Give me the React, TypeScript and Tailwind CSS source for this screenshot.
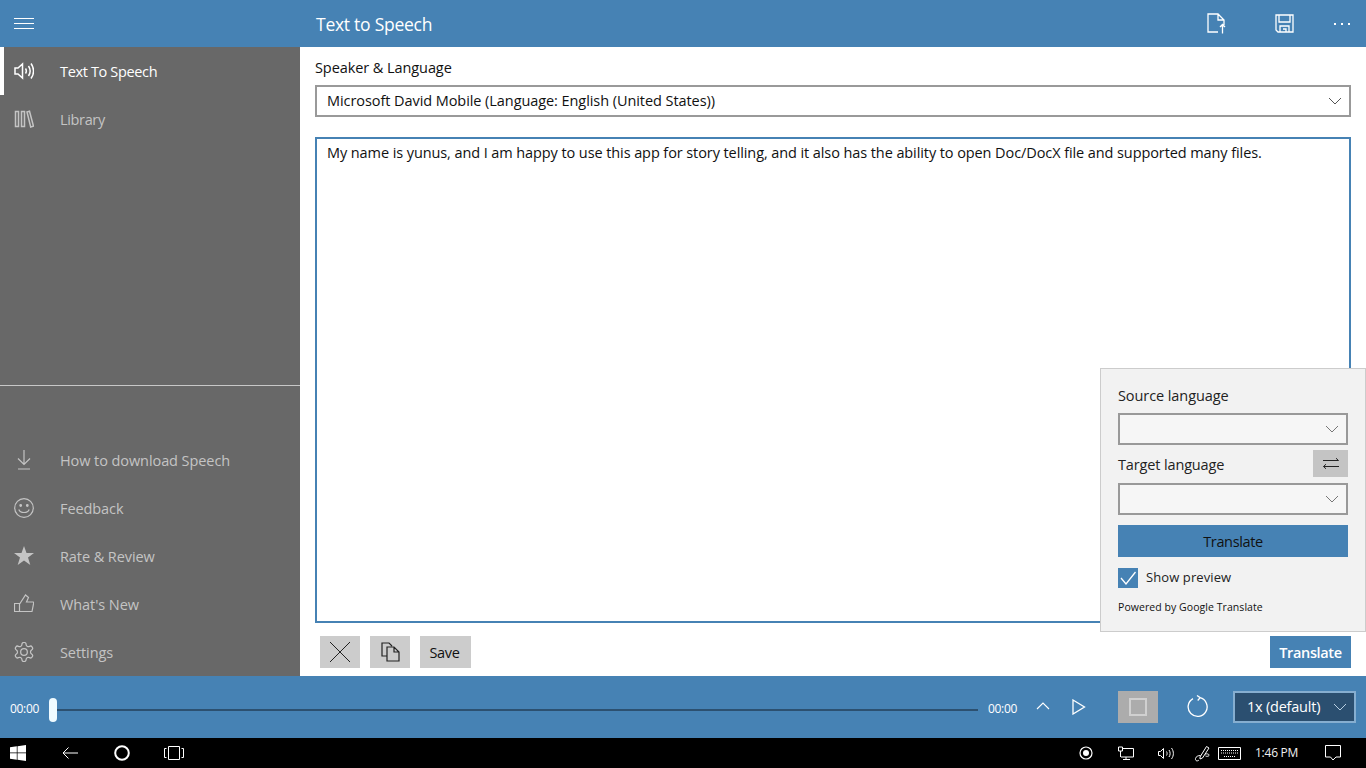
import React from "react";

const font = { fontFamily: '"Open Sans", "Noto Sans", sans-serif' };

function Chevron({ className = "", color = "#555" }: { className?: string; color?: string }) {
  return (
    <svg width="14" height="8" viewBox="0 0 14 8" className={className} fill="none" stroke={color} strokeWidth="1">
      <path d="M1 1l6 6 6-6" />
    </svg>
  );
}

function SelectBox() {
  return (
    <div className="h-8 w-[230px] border-2 border-[#999999] bg-[#f6f6f6] flex items-center justify-end pr-[7px]">
      <Chevron color="#777" />
    </div>
  );
}

const navIcon = "w-[20px] h-[20px] shrink-0";

function Item({ icon, label, active, tight }: { icon: React.ReactNode; label: string; active?: boolean; tight?: boolean }) {
  return (
    <div className={`relative h-12 flex items-center pl-[14px] ${active ? "text-white" : "text-[#c4c4c4]"}`}>
      {active && <div className="absolute left-0 top-0 bottom-0 w-1 bg-white" />}
      {icon}
      <span className={`ml-[26px] mt-[2px] text-[14.5px] ${tight ? "tracking-[-0.35px]" : "tracking-[-0.08px]"}`}>{label}</span>
    </div>
  );
}

export default function App() {
  return (
    <div style={font} className="w-[1366px] h-[768px] overflow-hidden flex flex-col relative bg-white text-[#111]">
      <header className="h-[47px] shrink-0 bg-[#4682b4] flex items-center text-white">
        <div className="w-[300px] pl-[14px]">
          <svg width="20" height="12" viewBox="0 0 20 12" stroke="white" strokeWidth="1"><path d="M0 .5h20M0 5.5h20M0 10.5h20" /></svg>
        </div>
        <div className="pl-4 text-[17.5px] tracking-[-0.26px] flex-1 mt-[2px]">Text to Speech</div>
        <svg width="20" height="21" viewBox="0 0 20 21" fill="none" stroke="white" strokeWidth="1.3" className="mr-[48px]">
          <path d="M11 19H1V1h10l6 6v5M11 1v6h6M15.500 20.500v-9M13 14l2.500-2.500L18 14" />
        </svg>
        <svg width="19" height="19" viewBox="0 0 19 19" fill="none" stroke="white" strokeWidth="1.3" className="mr-[40px]">
          <path d="M1 1h17v17H3l-2-2zM4 1v7h11V1M5 18v-6h9v6M8 15h3v3" />
        </svg>
        <svg width="16" height="3" viewBox="0 0 16 3" fill="white" className="mr-4 mt-[2px]">
          <rect x="0" y="0" width="2" height="2" /><rect x="7" y="0" width="2" height="2" /><rect x="14" y="0" width="2" height="2" />
        </svg>
      </header>

      <div className="flex-1 flex min-h-0">
        <aside className="w-[300px] shrink-0 bg-[#686868] flex flex-col">
          <div className="h-[338px] border-b border-[#c8c8c8] shrink-0 box-content">
            <Item active tight label="Text To Speech" icon={
              <svg className={navIcon} viewBox="0 0 20 20" fill="none" stroke="white" strokeWidth="1.5">
                <path d="M1 7v6h3l4.500 4V3L4 7zM11.500 7.500c1 1.500 1 3.500 0 5M14.500 5c2 3 2 7 0 10M17 2.500c3.400 4.500 3.400 10.500 0 15" />
              </svg>} />
            <Item tight label="Library" icon={
              <svg className={navIcon} viewBox="0 0 20 20" fill="none" stroke="#c4c4c4" strokeWidth="1.500">
                <path d="M1.500 2.500h3v15h-3zM7.500 2.500h3v15h-3zM13 3l2.500-.8 4 15-2.800.8z" />
              </svg>} />
          </div>
          <div className="mt-[50px]">
            <Item label="How to download Speech" icon={
              <svg className={navIcon} viewBox="0 0 20 20" fill="none" stroke="#c4c4c4" strokeWidth="1.200">
                <path d="M10 0v14M4 8.500l6 6 6-6M4 19h12" />
              </svg>} />
            <Item label="Feedback" icon={
              <svg className={navIcon} viewBox="0 0 20 20" fill="none" stroke="#c4c4c4" strokeWidth="1.200">
                <circle cx="10" cy="10" r="9.300" />
                <path d="M4.800 11.500c1.500 4 8.900 4 10.400 0" />
                <circle cx="6.700" cy="7.500" r=".8" fill="#c4c4c4" /><circle cx="13.300" cy="7.500" r=".8" fill="#c4c4c4" />
              </svg>} />
            <Item label="Rate & Review" icon={
              <svg className={navIcon} viewBox="0 0 20 20" fill="#c4c4c4">
                <path d="M10 0l2.500 7H20l-6 4.500 2.300 7.500L10 14.500 3.700 19 6 11.500 0 7h7.500z" />
              </svg>} />
            <Item label="What's New" icon={
              <svg className={navIcon} viewBox="0 0 20 20" fill="none" stroke="#c4c4c4" strokeWidth="1.200">
                <path d="M.5 17.500v-8h5.500L11.500 1l3 2.500-2 4.500h6.500c.8 0 .8 1 .5 2l-1.500 7.500zM5.500 9.500v8" />
              </svg>} />
            <Item label="Settings" icon={
              <svg className={navIcon} viewBox="1.500 1.500 21 21" fill="none" stroke="#c4c4c4" strokeWidth="1.300">
                <path d="M12.220 2h-.44a2 2 0 0 0-2 2v.18a2 2 0 0 1-1 1.730l-.43.250a2 2 0 0 1-2 0l-.15-.080a2 2 0 0 0-2.730.730l-.22.380a2 2 0 0 0 .730 2.730l.15.100a2 2 0 0 1 1 1.720v.51a2 2 0 0 1-1 1.740l-.15.090a2 2 0 0 0-.73 2.730l.22.380a2 2 0 0 0 2.730.730l.15-.080a2 2 0 0 1 2 0l.43.250a2 2 0 0 1 1 1.730V20a2 2 0 0 0 2 2h.44a2 2 0 0 0 2-2v-.18a2 2 0 0 1 1-1.730l.43-.250a2 2 0 0 1 2 0l.15.080a2 2 0 0 0 2.730-.730l.22-.390a2 2 0 0 0-.73-2.730l-.15-.080a2 2 0 0 1-1-1.740v-.5a2 2 0 0 1 1-1.740l.15-.090a2 2 0 0 0 .73-2.730l-.22-.380a2 2 0 0 0-2.730-.730l-.15.080a2 2 0 0 1-2 0l-.43-.250a2 2 0 0 1-1-1.730V4a2 2 0 0 0-2-2z" />
                <circle cx="12" cy="12" r="3.500" />
              </svg>} />
          </div>
        </aside>

        <main className="flex-1 flex flex-col pl-[15px] pr-[15px] pt-[11px]">
          <div className="text-[14.5px] tracking-[-0.08px] leading-[20px] h-[27px]">Speaker &amp; Language</div>
          <div className="h-8 border-2 border-[#999999] flex items-center justify-between pl-[10px] pr-[7px] text-[14.5px] tracking-[-0.07px]">
            <span>Microsoft David Mobile (Language: English (United States))</span>
            <Chevron />
          </div>
          <div className="mt-5 h-[486px] border-2 border-[#4682b4] pl-[10px] pr-2 pt-[4px] text-[14.5px] tracking-[-0.09px] leading-[20px]">
            My name is yunus, and I am happy to use this app for story telling, and it also has the ability to open Doc/DocX file and supported many files.
          </div>
          <div className="mt-[13px] flex items-start pl-[5px]">
            <button className="w-10 h-8 bg-[#cccccc] flex items-center justify-center">
              <svg width="20" height="20" viewBox="0 0 20 20" stroke="#222" strokeWidth="1" fill="none"><path d="M0 0l20 20M20 0L0 20" /></svg>
            </button>
            <button className="w-10 h-8 ml-[10px] bg-[#cccccc] flex items-center justify-center">
              <svg width="19" height="20" viewBox="0 0 19 20" stroke="#222" strokeWidth="1.200" fill="none">
                <path d="M6 14H1V1h7l3 3M6 5h7l5 5v9H6zM13 5v5h5" />
              </svg>
            </button>
            <button className="h-8 w-[51px] ml-[10px] bg-[#cccccc] text-[14.5px] tracking-[-0.35px] pt-[2px] pr-[2px]">Save</button>
            <button className="ml-auto w-[81px] h-8 bg-[#4682b4] text-white text-[14.5px] font-semibold tracking-[-0.35px] pt-[2px]">Translate</button>
          </div>
        </main>
      </div>

      <div className="h-[62px] shrink-0 bg-[#4682b4] flex items-center text-white">
        <span className="ml-[10px] text-[12px] tracking-[-0.3px] w-[39px] mt-[4px]">00:00</span>
        <div className="w-2 h-6 rounded-full bg-[#f0fbff] shrink-0 mt-[6px]" />
        <div className="h-[2px] w-[921px] bg-[#2c5070] mt-[6px]" />
        <span className="ml-[10px] text-[12px] tracking-[-0.3px] w-[28px] mt-[4px]">00:00</span>
        <svg width="14" height="8" viewBox="0 0 14 8" fill="none" stroke="white" strokeWidth="1.100" className="ml-[20px] mb-[2px]"><path d="M1 7l6-6 6 6" /></svg>
        <svg width="14" height="16" viewBox="0 0 14 16" fill="none" stroke="white" strokeWidth="1.300" className="ml-[22px] mb-[1px]"><path d="M1 1l11.500 7L1 15z" /></svg>
        <div className="ml-[32px] w-10 h-8 bg-[#acacac] flex items-center justify-center mb-[1px]">
          <div className="w-[18px] h-[18px] border-2 border-[#d0d0d0]" />
        </div>
        <svg width="22" height="23" viewBox="0 0 22 23" fill="none" stroke="white" strokeWidth="1.300" className="ml-[29px] mb-[1px]">
          <path d="M6 3.600a9.500 9.500 0 1 0 7-.9M10 .5l3.200 2.200-2.500 2.800" />
        </svg>
        <div className="ml-[24px] w-[123px] h-8 border-2 border-[#86aed0] bg-[#2b4f70] flex items-center justify-between pl-[12px] pr-[7px] mb-[1px] text-[14.5px] tracking-[-0.22px]">
          <span>1x (default)</span>
          <Chevron color="#b8cfe2" />
        </div>
      </div>

      <div className="h-[30px] shrink-0 bg-black flex items-center text-white relative">
        <svg width="16" height="16" viewBox="0 0 16 16" fill="white" className="ml-[10px]"><path d="M0 2.300L6.800 1.300v6.300H0zM7.500 1.200L16 0v7.600H7.500zM0 8.300h6.800v6.400L0 13.700zM7.500 8.300H16V16l-8.500-1.200z" /></svg>
        <svg width="16" height="12" viewBox="0 0 16 12" fill="none" stroke="white" strokeWidth="1" className="ml-[36px]"><path d="M16 6H1M6.500.5L1 6l5.500 5.500" /></svg>
        <svg width="16" height="16" viewBox="0 0 16 16" fill="none" stroke="white" strokeWidth="2" className="ml-[36px]"><circle cx="8" cy="8" r="6.800" /></svg>
        <svg width="20" height="14" viewBox="0 0 20 14" fill="none" stroke="white" strokeWidth="1" className="ml-[34px]"><path d="M4.500.5h11v13h-11zM2.500 2.500H.5v9h2M17.500 2.500h2v9h-2" /></svg>
        <div className="ml-auto flex items-center">
          <svg width="14" height="14" viewBox="0 0 14 14" fill="none" className="mr-[25px]"><circle cx="7" cy="7" r="6" stroke="white" strokeWidth="1.200" /><circle cx="7" cy="7" r="3" fill="white" /></svg>
          <svg width="16" height="14" viewBox="0 0 16 14" fill="none" stroke="white" strokeWidth="1" className="mr-[24px]"><path d="M4 2.500h11.500v8.500H3M8 11v2.500M5 13.500h7M.5 1h4v4h-4zM2.500 5v6" /></svg>
          <svg width="16" height="13" viewBox="0 0 16 13" fill="none" stroke="white" strokeWidth="1" className="mr-[20px]"><path d="M.5 4.500v4h2l3 3v-10l-3 3zM8.500 4.500c.8 1.200.8 2.800 0 4M11 3c1.500 2 1.500 5 0 7M13.500 1c2.500 3.500 2.500 7.500 0 11" /></svg>
          <svg width="17" height="17" viewBox="0 0 17 17" fill="none" stroke="white" strokeWidth="1" className="mr-[7px]"><path d="M5 15c-1.500 1.500-4 1-3.500-1.500C2 11.500 4 10.500 6.500 10.500M6 12L12.500 1.500l2.500 1.500L8.500 13 6 14zM11 9c2.500-.5 4.500.2 4 1.500-.5 1-2.500 1-3.500.5" /></svg>
          <svg width="23" height="13" viewBox="0 0 23 13" fill="none" stroke="white" strokeWidth="1" className="mr-[14px]"><path d="M.5.5h22v12H.5z" /><path d="M3 3.500h17M3 6h17M6 9.500h11" strokeDasharray="1 1" /></svg>
          <span className="text-[12px] tracking-[-0.25px] w-[45px] text-[#f0f0f0]">1:46 PM</span>
          <svg width="16" height="16" viewBox="0 0 16 16" fill="none" stroke="white" strokeWidth="1" className="ml-[25px] mr-[25px]"><path d="M.5.5h15v11.500h-4.500L8 15l-2.500-3H.5z" /></svg>
        </div>
      </div>

      <div className="absolute left-[1100px] top-[368px] w-[266px] h-[264px] bg-[#f2f2f2] border border-[#cccccc] pl-[17px] pt-[17px]">
        <div className="text-[14.5px] tracking-[-0.08px] leading-[20px] text-[#222] mb-[7px]">Source language</div>
        <SelectBox />
        <div className="relative h-[38px] flex items-center">
          <span className="text-[14.5px] tracking-[-0.14px] text-[#222] mt-[2px]">Target language</span>
          <div className="absolute left-[195px] top-[5px] w-[35px] h-[27px] bg-[#c4c4c4] flex items-center justify-center">
            <svg width="16" height="11" viewBox="0 0 16 11" fill="none" stroke="#222" strokeWidth="1"><path d="M0 2.500h15.500M13 .2l2.500 2.300M16 8.500H.5M3 6.200L.5 8.500 3 10.800" /></svg>
          </div>
        </div>
        <SelectBox />
        <div className="mt-[10px] w-[230px] h-8 bg-[#4682b4] flex items-center justify-center text-[14.5px] tracking-[-0.35px] text-[#111] pt-[2px]">Translate</div>
        <div className="mt-[11px] flex items-center">
          <div className="w-5 h-5 bg-[#4682b4] flex items-center justify-center">
            <svg width="16" height="14" viewBox="0 0 16 14" fill="none" stroke="white" strokeWidth="1.300"><path d="M1 7l5 6L15.500 1" /></svg>
          </div>
          <span className="ml-2 text-[13px] tracking-[0.1px] text-[#222]">Show preview</span>
        </div>
        <div className="mt-[12px] text-[10.500px] tracking-[0.06px] leading-[14px] text-[#111]">Powered by Google Translate</div>
      </div>
    </div>
  );
}
